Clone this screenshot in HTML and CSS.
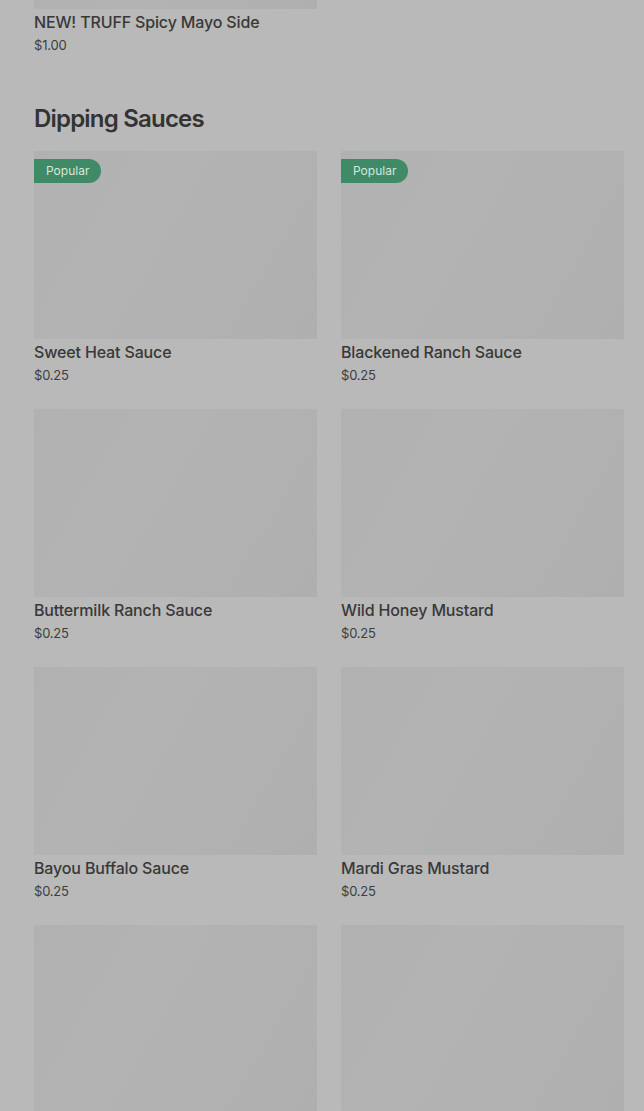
FILE: index.html
```html
<!DOCTYPE html>
<html lang="en">
<head>
    <meta charset="UTF-8">
    <meta name="viewport" content="width=device-width, initial-scale=1.0">
    <title>Menu</title>
    <link rel="stylesheet" href="styles.css">
</head>
<body>
    <!-- Previous section (scrolled) -->
    <div class="menu">
        <div class="grid">
            <div class="item">
                <div class="photo photo-cut"></div>
                <div class="name">NEW! TRUFF Spicy Mayo Side</div>
                <div class="price">$1.00</div>
            </div>
        </div>

        <!-- Dipping Sauces -->
        <h2 class="section-title">Dipping Sauces</h2>
        <div class="grid">
            <div class="item">
                <div class="photo"><span class="badge">Popular</span></div>
                <div class="name">Sweet Heat Sauce</div>
                <div class="price">$0.25</div>
            </div>
            <div class="item">
                <div class="photo"><span class="badge">Popular</span></div>
                <div class="name">Blackened Ranch Sauce</div>
                <div class="price">$0.25</div>
            </div>
            <div class="item">
                <div class="photo"></div>
                <div class="name">Buttermilk Ranch Sauce</div>
                <div class="price">$0.25</div>
            </div>
            <div class="item">
                <div class="photo"></div>
                <div class="name">Wild Honey Mustard</div>
                <div class="price">$0.25</div>
            </div>
            <div class="item">
                <div class="photo"></div>
                <div class="name">Bayou Buffalo Sauce</div>
                <div class="price">$0.25</div>
            </div>
            <div class="item">
                <div class="photo"></div>
                <div class="name">Mardi Gras Mustard</div>
                <div class="price">$0.25</div>
            </div>
            <div class="item">
                <div class="photo"></div>
            </div>
            <div class="item">
                <div class="photo"></div>
            </div>
        </div>
    </div>
</body>
</html>
```

FILE: styles.css
```css
body {
    margin: 0;
    padding: 0;
    background: #b9b9b9;
    font-family: Inter, "Noto Sans", Arial, sans-serif;
    color: #333333;
    overflow: hidden;
    height: 1111px;
}

.menu {
    padding: 0 20px 0 34px;
}

.grid {
    display: grid;
    grid-template-columns: 283px 283px;
    column-gap: 24px;
    row-gap: 24px;
}

.item {
    display: flex;
    flex-direction: column;
}

.photo {
    position: relative;
    height: 188px;
    background: linear-gradient(120deg, #b1b1b1 0%, #b3b3b3 35%, #b2b2b2 55%, #afafaf 100%);
}

.photo-cut {
    height: 9px;
}

.badge {
    position: absolute;
    top: 8px;
    left: 0;
    height: 24px;
    line-height: 24px;
    padding: 0 12px;
    border-radius: 0 12px 12px 0;
    background: #3f8a67;
    color: #d7e7dc;
    font-size: 12px;
}

.name {
    margin-top: 1px;
    font-size: 16px;
    line-height: 24px;
    font-weight: 500;
    letter-spacing: -0.15px;
    color: #383838;
}

.price {
    margin-top: 1px;
    font-size: 13px;
    line-height: 20px;
    letter-spacing: -0.2px;
    color: #3e3e3e;
}

.section-title {
    margin: 48px 0 16px;
    font-size: 24px;
    line-height: 32px;
    font-weight: 600;
    letter-spacing: -0.8px;
    color: #333333;
}
```
